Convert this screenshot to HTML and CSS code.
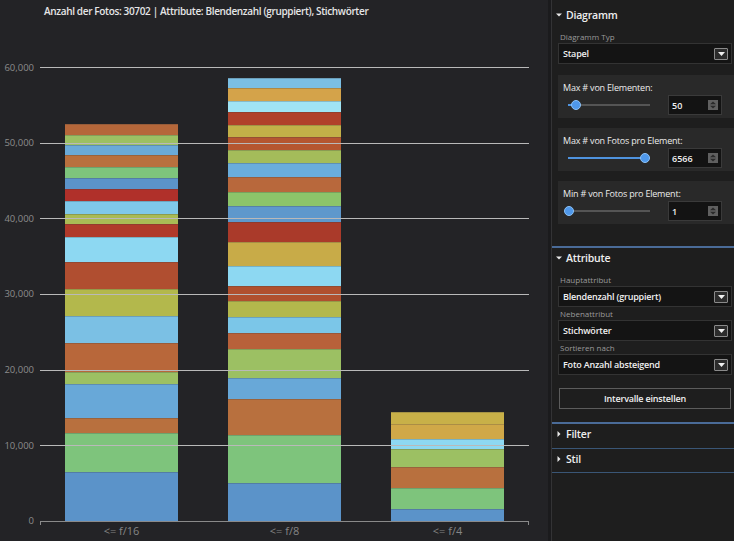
FILE: index.html
```html
<!DOCTYPE html>
<html lang="de">
<head>
<meta charset="utf-8">
<title>Diagramm</title>
<link rel="stylesheet" href="styles.css">
</head>
<body>
<div class="app">
  <main class="chart">
    <h1 class="title">Anzahl der Fotos: 30702 | Attribute: Blendenzahl (gruppiert), Stichwörter</h1>
    <div class="plot">
      <div class="grid">
        <div class="gl"><span>60,000</span><i></i></div>
        <div class="gl"><span>50,000</span><i></i></div>
        <div class="gl"><span>40,000</span><i></i></div>
        <div class="gl"><span>30,000</span><i></i></div>
        <div class="gl"><span>20,000</span><i></i></div>
        <div class="gl"><span>10,000</span><i></i></div>
        <div class="gl base"><span>0</span><i></i></div>
      </div>
      <div class="bars">
        <div class="band">
          <div class="bar">
            <div class="seg" style="height:10.7px;background:#b5673a"></div>
            <div class="seg" style="height:10px;background:#9cc063"></div>
            <div class="seg" style="height:10.6px;background:#6aaad8"></div>
            <div class="seg" style="height:11.4px;background:#b8703e"></div>
            <div class="seg" style="height:11.3px;background:#7ec47c"></div>
            <div class="seg" style="height:11.3px;background:#5b93c9"></div>
            <div class="seg" style="height:11.4px;background:#b0302a"></div>
            <div class="seg" style="height:13.3px;background:#7fc8ea"></div>
            <div class="seg" style="height:9.7px;background:#a9bb55"></div>
            <div class="seg" style="height:13.3px;background:#b03a2a"></div>
            <div class="seg" style="height:25px;background:#8dd8f2"></div>
            <div class="seg" style="height:27px;background:#b04e30"></div>
            <div class="seg" style="height:27px;background:#b3b84c"></div>
            <div class="seg" style="height:27.3px;background:#7bc0e4"></div>
            <div class="seg" style="height:29px;background:#b8673a"></div>
            <div class="seg" style="height:11.4px;background:#9cc063"></div>
            <div class="seg" style="height:34.6px;background:#68a8d8"></div>
            <div class="seg" style="height:14.7px;background:#b8703e"></div>
            <div class="seg" style="height:39px;background:#7ec47c"></div>
            <div class="seg" style="height:49px;background:#5b93c9"></div>
          </div>
        </div>
        <div class="band">
          <div class="bar">
            <div class="seg" style="height:10px;background:#7bbfe4"></div>
            <div class="seg" style="height:12.4px;background:#d4a34a"></div>
            <div class="seg" style="height:11.6px;background:#a0e4f4"></div>
            <div class="seg" style="height:12.7px;background:#b0402a"></div>
            <div class="seg" style="height:11.7px;background:#c2b048"></div>
            <div class="seg" style="height:13.3px;background:#b55630"></div>
            <div class="seg" style="height:13.3px;background:#a4bc5a"></div>
            <div class="seg" style="height:13.7px;background:#6aaddc"></div>
            <div class="seg" style="height:14.7px;background:#b8683c"></div>
            <div class="seg" style="height:14.6px;background:#8cc46a"></div>
            <div class="seg" style="height:15.4px;background:#5e98cc"></div>
            <div class="seg" style="height:20.3px;background:#aa3a2a"></div>
            <div class="seg" style="height:23.7px;background:#c8ab48"></div>
            <div class="seg" style="height:20px;background:#8dd8f2"></div>
            <div class="seg" style="height:15.3px;background:#b0502e"></div>
            <div class="seg" style="height:16.3px;background:#b3b84c"></div>
            <div class="seg" style="height:15.7px;background:#7bc6e8"></div>
            <div class="seg" style="height:16px;background:#b8613a"></div>
            <div class="seg" style="height:29.3px;background:#9cc063"></div>
            <div class="seg" style="height:21px;background:#68a8d8"></div>
            <div class="seg" style="height:35.4px;background:#b8703e"></div>
            <div class="seg" style="height:48.3px;background:#7ec47c"></div>
            <div class="seg" style="height:38px;background:#5b93c9"></div>
          </div>
        </div>
        <div class="band">
          <div class="bar">
            <div class="seg" style="height:12.3px;background:#c8b048"></div>
            <div class="seg" style="height:15px;background:#d0a848"></div>
            <div class="seg" style="height:9.7px;background:#8dd8f2"></div>
            <div class="seg" style="height:17.7px;background:#9cc063"></div>
            <div class="seg" style="height:21px;background:#b8703e"></div>
            <div class="seg" style="height:21.3px;background:#7ec47c"></div>
            <div class="seg" style="height:12px;background:#5b93c9"></div>
          </div>
        </div>
      </div>
    </div>
    <div class="xlabels">
      <span>&lt;= f/16</span>
      <span>&lt;= f/8</span>
      <span>&lt;= f/4</span>
    </div>
  </main>

  <aside class="panel">
    <section class="sec sec-diagramm">
      <div class="sec-head">
        <svg class="caret" width="6" height="6" viewBox="0 0 6 6"><path d="M0 1.5 H6 L3 4.5 Z" fill="#e8e8e8"/></svg>
        <span>Diagramm</span>
      </div>
      <div class="sec-body">
        <div class="field-label">Diagramm Typ</div>
        <div class="select">
          <span>Stapel</span>
          <b class="dd"><svg width="7" height="4" viewBox="0 0 7 4"><path d="M0 0 H7 L3.5 4 Z" fill="#f0f0f0"/></svg></b>
        </div>

        <div class="card">
          <div class="card-label">Max # von Elementen:</div>
          <div class="card-row">
            <div class="slider"><div class="fill" style="width:10%"></div><div class="thumb"></div></div>
            <div class="num"><span>50</span><b class="spin"><svg width="6" height="8" viewBox="0 0 6 8"><path d="M0 3.2 L3 0.6 L6 3.2 Z M0 4.8 L3 7.4 L6 4.8 Z" fill="#2a2a2a"/></svg></b></div>
          </div>
        </div>

        <div class="card">
          <div class="card-label">Max # von Fotos pro Element:</div>
          <div class="card-row">
            <div class="slider"><div class="fill" style="width:100%"></div><div class="thumb"></div></div>
            <div class="num"><span>6566</span><b class="spin"><svg width="6" height="8" viewBox="0 0 6 8"><path d="M0 3.2 L3 0.6 L6 3.2 Z M0 4.8 L3 7.4 L6 4.8 Z" fill="#2a2a2a"/></svg></b></div>
          </div>
        </div>

        <div class="card">
          <div class="card-label">Min # von Fotos pro Element:</div>
          <div class="card-row">
            <div class="slider"><div class="fill" style="width:1%"></div><div class="thumb"></div></div>
            <div class="num"><span>1</span><b class="spin"><svg width="6" height="8" viewBox="0 0 6 8"><path d="M0 3.2 L3 0.6 L6 3.2 Z M0 4.8 L3 7.4 L6 4.8 Z" fill="#2a2a2a"/></svg></b></div>
          </div>
        </div>
      </div>
    </section>

    <section class="sec sec-attr">
      <div class="sec-head">
        <svg class="caret" width="6" height="6" viewBox="0 0 6 6"><path d="M0 1.5 H6 L3 4.5 Z" fill="#e8e8e8"/></svg>
        <span>Attribute</span>
      </div>
      <div class="sec-body">
        <div class="field-label">Hauptattribut</div>
        <div class="select">
          <span>Blendenzahl (gruppiert)</span>
          <b class="dd"><svg width="7" height="4" viewBox="0 0 7 4"><path d="M0 0 H7 L3.5 4 Z" fill="#f0f0f0"/></svg></b>
        </div>
        <div class="field-label">Nebenattribut</div>
        <div class="select">
          <span>Stichwörter</span>
          <b class="dd"><svg width="7" height="4" viewBox="0 0 7 4"><path d="M0 0 H7 L3.5 4 Z" fill="#f0f0f0"/></svg></b>
        </div>
        <div class="field-label">Sortieren nach</div>
        <div class="select">
          <span>Foto Anzahl absteigend</span>
          <b class="dd"><svg width="7" height="4" viewBox="0 0 7 4"><path d="M0 0 H7 L3.5 4 Z" fill="#f0f0f0"/></svg></b>
        </div>
        <div class="button">Intervalle einstellen</div>
      </div>
    </section>

    <section class="sec sec-closed">
      <div class="sec-head">
        <svg class="caret" width="6" height="6" viewBox="0 0 6 6"><path d="M1.5 0 V6 L4.5 3 Z" fill="#e8e8e8"/></svg>
        <span>Filter</span>
      </div>
    </section>
    <section class="sec sec-closed">
      <div class="sec-head">
        <svg class="caret" width="6" height="6" viewBox="0 0 6 6"><path d="M1.5 0 V6 L4.5 3 Z" fill="#e8e8e8"/></svg>
        <span>Stil</span>
      </div>
    </section>
  </aside>
</div>
</body>
</html>
```

FILE: styles.css
```css
* { box-sizing: border-box; }

html, body {
  margin: 0;
  padding: 0;
  background: #232326;
  font-family: "Open Sans", "Noto Sans", sans-serif;
}

.app {
  display: flex;
  width: 734px;
  height: 541px;
  overflow: hidden;
}

/* ---------- chart ---------- */
.chart {
  width: 551px;
  flex-shrink: 0;
  background: #232326;
  border-right: 3px solid #1b1b1d;
}

.title {
  margin: 4px 0 0 44px;
  font-size: 10px;
  line-height: 14px;
  font-weight: 600;
  color: #e6e6e6;
  letter-spacing: -0.35px;
  white-space: nowrap;
}

.plot {
  display: grid;
  width: 529px;
  margin-top: 49px;
}

.grid {
  grid-area: 1 / 1;
  height: 455px;
  display: flex;
  flex-direction: column;
  justify-content: space-between;
}

.gl {
  display: flex;
  align-items: center;
  height: 1px;
}

.gl span {
  width: 34px;
  flex-shrink: 0;
  text-align: right;
  font-size: 9.5px;
  line-height: 12px;
  color: #8c8c8c;
}

.gl i {
  flex: 1;
  height: 1px;
  margin-left: 6px;
  background: #b9b9b9;
  position: relative;
}

.base i { background: #8a8a8a; }

.base i::before,
.base i::after {
  content: "";
  position: absolute;
  top: 0;
  width: 1px;
  height: 4px;
  background: #8a8a8a;
}
.base i::before { left: 0; }
.base i::after { right: 0; }

.bars {
  grid-area: 1 / 1;
  margin-left: 40px;
  height: 454px;
  display: flex;
  align-items: flex-end;
}

.band {
  flex: 1;
  padding: 0 25px;
  display: flex;
  align-items: flex-end;
}

.bar {
  width: 113px;
  display: flex;
  flex-direction: column;
}

.seg {
  flex-shrink: 0;
  box-shadow: inset 0 1px 0 rgba(60, 60, 60, 0.25);
}

.xlabels {
  display: flex;
  width: 489px;
  margin: 2px 0 0 40px;
}

.xlabels span {
  flex: 1;
  text-align: center;
  font-size: 11px;
  line-height: 14px;
  color: #858585;
}

/* ---------- panel ---------- */
.panel {
  flex: 1;
  background: #1e1e1e;
  border-left: 1px solid #333335;
  color: #e8e8e8;
}

.sec-head {
  display: flex;
  align-items: center;
  padding-left: 4px;
  font-size: 10.5px;
  line-height: 14px;
  font-weight: 600;
  letter-spacing: -0.2px;
  color: #eeeeee;
}

.caret {
  flex-shrink: 0;
  margin-right: 4px;
}

.sec-diagramm .sec-head { padding-top: 8px; padding-bottom: 9px; }
.sec-diagramm .sec-body { padding: 0 0 22px 6px; }

.sec-attr {
  border-top: 2px solid #4a6b98;
}
.sec-attr .sec-head { padding-top: 3px; padding-bottom: 9px; }
.sec-attr .sec-body { padding: 0 0 13px 6px; }

.sec-closed {
  border-bottom: 1px solid #3a5676;
}
.sec-attr + .sec-closed { border-top: 2px solid #4a6b98; }
.sec-closed .sec-head { padding-top: 3px; padding-bottom: 6px; }
.sec-attr + .sec-closed .sec-head { padding-bottom: 7px; }

.field-label {
  font-size: 8px;
  line-height: 12px;
  color: #9a9a9a;
  padding-left: 2px;
}

.select {
  display: flex;
  align-items: center;
  height: 21px;
  margin: 0 2px 1px 0;
  padding: 0 3px 0 4px;
  background: #141414;
  border: 1px solid #333;
  font-size: 9px;
  font-weight: 600;
  letter-spacing: -0.2px;
  color: #f0f0f0;
}

.select span { flex: 1; }

.dd {
  width: 14px;
  height: 12px;
  display: flex;
  align-items: center;
  justify-content: center;
  background: #2c2c2c;
  border: 1px solid #8a8a8a;
  border-radius: 1px;
}

.card {
  margin-top: 11px;
  height: 43px;
  padding: 6px 0 0 5px;
  background: #292929;
}
.card + .card { margin-top: 10px; }

.card-label {
  font-size: 9px;
  line-height: 14px;
  letter-spacing: -0.2px;
  color: #ececec;
}

.card-row {
  display: flex;
  align-items: center;
  height: 20px;
}

.slider {
  display: flex;
  align-items: center;
  width: 82px;
  height: 2px;
  margin-left: 5px;
  background: #555;
}

.fill {
  height: 2px;
  background: #4f93de;
}

.thumb {
  flex-shrink: 0;
  width: 10px;
  height: 10px;
  margin-left: -5px;
  border-radius: 50%;
  background: #4f98ea;
  border: 1.5px solid #8cc2f7;
}

.num {
  display: flex;
  align-items: center;
  width: 54px;
  height: 20px;
  margin-left: 18px;
  padding: 0 3px 0 3px;
  background: #131313;
  border: 1px solid #3a3a3a;
  font-size: 9px;
  font-weight: 600;
  color: #f0f0f0;
}

.num span { flex: 1; }

.spin {
  width: 10px;
  height: 10px;
  display: flex;
  align-items: center;
  justify-content: center;
  background: #606060;
}

.button {
  margin: 13px 3px 0 1px;
  height: 21px;
  border: 1px solid #5c5c5c;
  background: #1e1e1e;
  display: flex;
  align-items: center;
  justify-content: center;
  font-size: 9px;
  font-weight: 600;
  letter-spacing: -0.2px;
  color: #f0f0f0;
}
```
